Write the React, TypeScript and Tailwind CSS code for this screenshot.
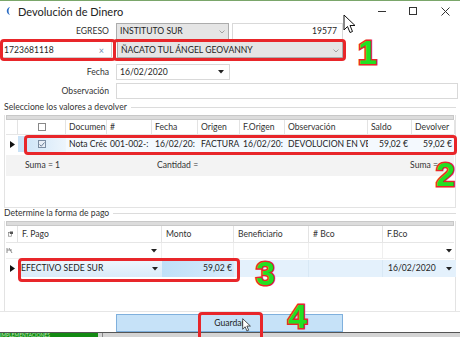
import React from "react";

const grid1Cols = [
  { w: 12, label: "" },
  { w: 48, label: "chk" },
  { w: 41, label: "Documen" },
  { w: 45, label: "#" },
  { w: 46, label: "Fecha" },
  { w: 42, label: "Origen" },
  { w: 45, label: "F.Origen" },
  { w: 83, label: "Observación" },
  { w: 44, label: "Saldo" },
  { w: 43, label: "Devolver" },
];

const row1 = ["Nota Créc", "001-002-:", "16/02/20:", "FACTURA", "16/02/20:", "DEVOLUCION EN VE"];

const grid2Cols = [
  { w: 12, label: "" },
  { w: 144, label: "F. Pago" },
  { w: 72, label: "Monto" },
  { w: 75, label: "Beneficiario" },
  { w: 74, label: "# Bco" },
  { w: 73, label: "F.Bco" },
];

function Chevron() {
  return (
    <svg width="6" height="4" viewBox="0 0 6 4" className="shrink-0">
      <path d="M0.5 0.5 L3 3 L5.5 0.5" fill="none" stroke="#9a9a9a" strokeWidth="0.9" />
    </svg>
  );
}

function DropTri() {
  return (
    <svg width="6" height="4" viewBox="0 0 6 4" className="shrink-0">
      <path d="M0 0 H6 L3 3.5 Z" fill="#222" />
    </svg>
  );
}

function RowArrow() {
  return (
    <svg width="5" height="7" viewBox="0 0 5 7">
      <path d="M0 0 L5 3.5 L0 7 Z" fill="#111" />
    </svg>
  );
}

function Num({ n }: { n: string }) {
  return (
    <span className="font-['Liberation_Sans',sans-serif] text-[34px] leading-none font-bold text-[#22e022] [-webkit-text-stroke:3px_#e8262a] [paint-order:stroke_fill]">
      {n}
    </span>
  );
}

function Pointer() {
  return (
    <svg width="14" height="20" viewBox="0 0 14 20">
      <path d="M1 1 L1 16 L4.5 12.5 L7 18.5 L9.5 17.5 L7 11.5 L12 11.5 Z" fill="#fff" stroke="#111" strokeWidth="1" strokeLinejoin="round" />
    </svg>
  );
}

export default function App() {
  return (
    <div className="relative w-[460px] h-[337px] overflow-hidden bg-white font-['Lato','Open_Sans',sans-serif] text-[8.6px] text-[#1e1e1e] leading-[11px]">
      {/* title bar */}
      <div className="flex h-[21px] items-center border-t border-[#7aa66a]">
        <svg width="8" height="10" viewBox="0 0 8 10" className="ml-[4px]">
          <path d="M6 1 C2 2 1.5 7.5 6 9 C4 7 4 3 6 1 Z" fill="#2b6cc4" />
        </svg>
        <span className="ml-[6px] text-[11px] text-[#222]">Devolución de Dinero</span>
        <div className="ml-auto flex items-center">
          <div className="w-[8px] border-t border-[#333]" />
          <div className="ml-[23px] h-[8px] w-[8px] border border-[#333]" />
          <svg width="9" height="9" viewBox="0 0 9 9" className="ml-[24px] mr-[10px]">
            <path d="M0.5 0.5 L8.5 8.5 M8.5 0.5 L0.5 8.5" stroke="#333" strokeWidth="1" />
          </svg>
        </div>
      </div>

      {/* header form */}
      <div className="mt-[2px] flex h-[17px] items-center">
        <span className="w-[109px] text-right text-[#333]">EGRESO</span>
        <div className="ml-[7px] flex h-full w-[113px] items-center justify-between border border-[#acacac] bg-[#e5e5e5] px-[3px]">
          <span>INSTITUTO SUR</span>
          <Chevron />
        </div>
        <div className="ml-[3px] flex h-full w-[111px] items-center justify-end border border-[#d9d9d9] pr-[5px]">
          19577
        </div>
      </div>
      <div className="mt-[1px] flex h-[17px] items-center">
        <div className="ml-[2px] flex h-full w-[110px] items-center justify-between border border-[#cfcfcf] pl-[1px] pr-[7px] pt-[2px]">
          <span>1723681118</span>
          <span className="text-[9px] text-[#6d8bb0]">×</span>
        </div>
        <div className="ml-[5px] flex h-full w-[226px] items-center justify-between border border-[#acacac] bg-[#e5e5e5] px-[3px] pt-[2px]">
          <span>ÑACATO TUL ÁNGEL GEOVANNY</span>
          <Chevron />
        </div>
      </div>
      <div className="mt-[6px] flex h-[16px] items-center">
        <span className="w-[109px] text-right text-[#333]">Fecha</span>
        <div className="ml-[7px] flex h-full w-[114px] items-center justify-between border border-[#d9d9d9] pl-[3px] pr-[5px]">
          <span>16/02/2020</span>
          <DropTri />
        </div>
      </div>
      <div className="mt-[3px] flex h-[16px] items-center">
        <span className="w-[109px] text-right text-[#333]">Observación</span>
        <div className="ml-[7px] h-full w-[342px] border border-[#d9d9d9]" />
      </div>

      {/* group 1 */}
      <div className="mt-[4px] flex h-[9px] items-center px-[4px]">
        <span className="text-[#333]">Seleccione los valores a devolver</span>
        <div className="ml-[4px] flex-1 border-t border-[#dcdcdc]" />
      </div>
      <div className="mt-[3px] ml-[4px] flex h-[93px] w-[452px] flex-col border-x border-b border-[#e3e3e3]">
        <div className="mx-[1px] h-[5px] border border-[#c8c8c8] bg-[#dcdcdc]" />
        <div className="mx-[1px] flex h-[15px] border-b border-[#e6e6e6]">
          {grid1Cols.map((c, i) => (
            <div key={i} style={{ width: c.w }} className="flex shrink-0 items-center border-r border-[#e3e3e3] px-[3px]">
              {c.label === "chk" ? (
                <div className="ml-[17px] h-[8px] w-[8px] border border-[#888] bg-white" />
              ) : (
                <span className="text-[#333]">{c.label}</span>
              )}
            </div>
          ))}
        </div>
        <div className="mx-[1px] mt-[1px] flex h-[16px] bg-[#f4f9fe]">
          <div className="flex w-[12px] shrink-0 items-center justify-center bg-white">
            <RowArrow />
          </div>
          <div className="flex w-[48px] shrink-0 items-center bg-gradient-to-r from-[#c9e2f7] to-[#edf5fc] pl-[20px]">
            <div className="flex h-[8px] w-[8px] items-center justify-center border border-[#7b8da3] bg-[#e8eef6]">
              <svg width="6" height="5" viewBox="0 0 6 5">
                <path d="M0.5 2.5 L2.3 4.2 L5.5 0.5" fill="none" stroke="#5a6f8a" strokeWidth="0.9" />
              </svg>
            </div>
          </div>
          {row1.map((t, i) => (
            <div key={i} style={{ width: grid1Cols[i + 2].w }} className="flex shrink-0 items-center overflow-hidden whitespace-nowrap px-[3px]">
              {t}
            </div>
          ))}
          <div className="flex w-[44px] shrink-0 items-center justify-end pr-[4px]">59,02 €</div>
          <div className="flex w-[43px] shrink-0 items-center justify-end pr-[3px]">59,02 €</div>
        </div>
        <div className="mx-[1px] mt-[3px] flex h-[21px] items-center bg-[#f3f3f3] text-[#333]">
          <span className="ml-[19px] w-[132px]">Suma = 1</span>
          <span>Cantidad =</span>
          <span className="ml-auto mr-[16px]">Suma =</span>
        </div>
        <div className="flex-1" />
      </div>

      {/* group 2 */}
      <div className="mt-[1px] flex h-[9px] items-center px-[4px]">
        <span className="text-[#333]">Determine la forma de pago</span>
        <div className="ml-[4px] flex-1 border-t border-[#dcdcdc]" />
      </div>
      <div className="mt-[3px] ml-[4px] flex h-[90px] w-[452px] flex-col border-x border-[#e3e3e3]">
        <div className="mx-[1px] h-[5px] border border-[#c8c8c8] bg-[#dcdcdc]" />
        <div className="mx-[1px] flex h-[17px] border-b border-[#e6e6e6]">
          {grid2Cols.map((c, i) => (
            <div key={i} style={{ width: c.w }} className="flex shrink-0 items-center border-r border-[#e3e3e3] px-[4px]">
              {i === 0 ? (
                <svg width="8" height="8" viewBox="0 0 8 8" className="-ml-[2px]">
                  <rect x="0.5" y="1.5" width="5" height="6" fill="#fff" stroke="#777" />
                  <rect x="3" y="0" width="5" height="4" fill="#555" />
                </svg>
              ) : (
                <span className="text-[#333]">{c.label}</span>
              )}
            </div>
          ))}
        </div>
        <div className="mx-[1px] flex h-[16px] border-b border-[#efefef]">
          <div className="flex w-[12px] shrink-0 items-center">
            <svg width="8" height="8" viewBox="0 0 8 8">
              <path d="M1 1 L1 6 M1 3 L6 3 M3 1 L6 6" stroke="#8a8a8a" strokeWidth="1" fill="none" />
            </svg>
          </div>
          <div className="flex w-[144px] shrink-0 items-center justify-end border-r border-[#efefef] pr-[4px]">
            <DropTri />
          </div>
          <div className="w-[72px] shrink-0 border-r border-[#efefef]" />
          <div className="w-[75px] shrink-0 border-r border-[#efefef]" />
          <div className="w-[74px] shrink-0 border-r border-[#efefef]" />
          <div className="flex w-[73px] shrink-0 items-center justify-end pr-[4px]">
            <DropTri />
          </div>
        </div>
        <div className="mx-[1px] mt-[1px] flex h-[17px]">
          <div className="flex w-[12px] shrink-0 items-center justify-center">
            <RowArrow />
          </div>
          <div className="flex w-[144px] shrink-0 items-center justify-between bg-gradient-to-b from-[#eef6fd] to-[#d9ebf9] pl-[3px] pr-[4px]">
            <span>EFECTIVO SEDE SUR</span>
            <DropTri />
          </div>
          <div className="flex w-[72px] shrink-0 items-center justify-end bg-gradient-to-r from-[#bfe0f8] to-[#d6ebfb] pr-[2px]">
            59,02 €
          </div>
          <div className="w-[75px] shrink-0 border-r border-[#d8e8f5] bg-[#e4f1fc]" />
          <div className="w-[74px] shrink-0 border-r border-[#d8e8f5] bg-[#e4f1fc]" />
          <div className="flex w-[73px] shrink-0 items-center justify-between bg-[#e4f1fc] pl-[5px] pr-[4px]">
            <span>16/02/2020</span>
            <DropTri />
          </div>
        </div>
        <div className="flex-1" />
      </div>

      {/* footer */}
      <div className="flex h-[21px] border-t border-[#e6e6e6] pt-[2px]">
        <div className="ml-[116px] flex h-[18px] w-[227px] items-center justify-center border border-[#7fb0dd] bg-[#c6e2f8] text-[#222]">
          Guardar
        </div>
      </div>
      <div className="flex h-[5px] border-t border-[#555] bg-[#d4d4d4]">
        <div className="w-[98px] overflow-hidden bg-[#138a13] text-[5px] leading-[5px] text-[#bfe8bf] whitespace-nowrap">
          IMPLEMENTACIONES
        </div>
        <div className="ml-[4px] w-[1px] bg-[#888]" />
      </div>

      {/* annotation overlays */}
      <div className="absolute left-[0px] top-[39px] h-[22px] w-[116px] rounded-[4px] border-[3px] border-[#e8262a]" />
      <div className="absolute left-[113px] top-[39px] h-[22px] w-[233px] rounded-[4px] border-[3px] border-[#e8262a]" />
      <div className="absolute left-[358px] top-[35px]"><Num n="1" /></div>
      <div className="absolute left-[24px] top-[135px] h-[20px] w-[433px] rounded-[4px] border-[3px] border-[#e8262a]" />
      <div className="absolute left-[436px] top-[157px]"><Num n="2" /></div>
      <div className="absolute left-[18px] top-[258px] h-[24px] w-[222px] rounded-[4px] border-[3px] border-[#e8262a]" />
      <div className="absolute left-[256px] top-[256px]"><Num n="3" /></div>
      <div className="absolute left-[198px] top-[312px] h-[30px] w-[65px] rounded-[4px] border-[3px] border-[#e8262a]" />
      <div className="absolute left-[288px] top-[299px]"><Num n="4" /></div>
      <div className="absolute left-[343px] top-[14px]"><Pointer /></div>
      <div className="absolute left-[242px] top-[318px] scale-[0.7] origin-top-left"><Pointer /></div>
    </div>
  );
}
